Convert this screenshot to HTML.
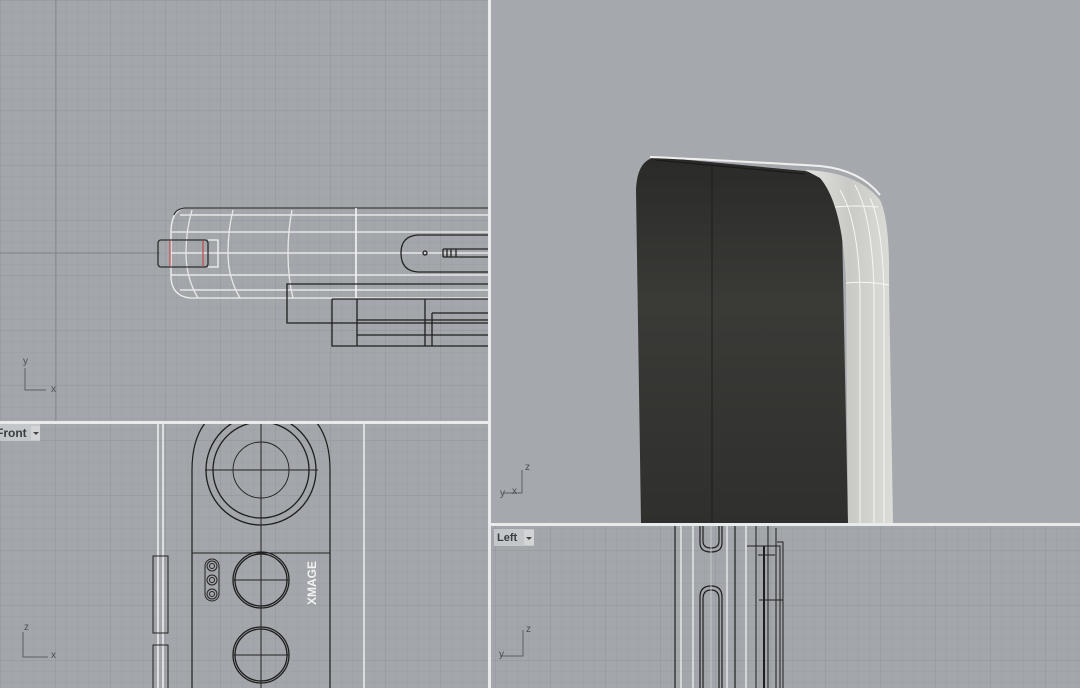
<!DOCTYPE html>
<html><head><style>
html,body{margin:0;padding:0;width:1080px;height:688px;overflow:hidden;background:#a3a7ab}
svg{display:block;font-family:"Liberation Sans",sans-serif}
</style></head><body>
<svg width="1080" height="688" viewBox="0 0 1080 688" xmlns="http://www.w3.org/2000/svg">
<defs>
<pattern id="g" width="11" height="11" patternUnits="userSpaceOnUse" x="0" y="0">
<path d="M0 0H11M0 0V11" stroke="#9b9fa3" stroke-width="1" fill="none"/>
</pattern>
<pattern id="G" width="55" height="55" patternUnits="userSpaceOnUse" x="0" y="0">
<rect width="55" height="55" fill="url(#g)"/>
<path d="M0 0H55M0 0V55" stroke="#92969b" stroke-width="1" fill="none"/>
</pattern>
<linearGradient id="dk" x1="0" y1="0" x2="0" y2="1">
<stop offset="0" stop-color="#2a2a28"/><stop offset="0.4" stop-color="#3a3a37"/><stop offset="1" stop-color="#2f302d"/>
</linearGradient>
<linearGradient id="sv" x1="0" y1="0" x2="1" y2="0">
<stop offset="0" stop-color="#e4e4e0"/><stop offset="0.5" stop-color="#c9cac6"/><stop offset="1" stop-color="#dcdcd8"/>
</linearGradient>
<clipPath id="cTL"><rect x="0" y="0" width="488" height="421"/></clipPath>
<clipPath id="cBL"><rect x="0" y="424" width="488" height="264"/></clipPath>
<clipPath id="cBR"><rect x="491" y="526" width="589" height="162"/></clipPath>
</defs>

<!-- TOP LEFT -->
<rect x="0" y="0" width="489" height="422" fill="#a3a7ab"/>
<rect x="0" y="0" width="489" height="422" fill="url(#G)"/>
<g clip-path="url(#cTL)">
<line x1="0" y1="253" x2="160" y2="253" stroke="#7f8388"/>
<line x1="56" y1="0" x2="56" y2="422" stroke="#8a8e93"/>
<g fill="none" stroke-width="1.3">
<path d="M488 208H185Q172 210 171 230V278Q172 296 190 298H488" stroke="#f2f2f2"/>
<path d="M488 208H185Q176 209 174 215" stroke="#333" />
<path d="M171 232H488M171 253H488M171 275H488M180 290H488M180 215H488" stroke="#f2f2f2"/>
<path d="M356 208V298" stroke="#f5f5f5" stroke-width="1.6"/>
<path d="M192 210Q186 230 186 253Q186 278 198 298M233 210Q228 230 228 253Q228 278 240 298M292 210Q288 230 288 253Q288 278 293 298" stroke="#e8e8e8"/>
<path d="M208 240H218V267H208" stroke="#f2f2f2"/>
<rect x="158" y="240" width="50" height="27" rx="3" stroke="#2c2c2c"/>
<path d="M170 241V266M203 241V266" stroke="#c0504d"/>
<path d="M488 235H418Q401 236 401 253Q401 271 418 272H488" stroke="#222"/>
<circle cx="425" cy="253" r="2" stroke="#222"/>
<path d="M443 249H488M443 257H488M443 249V257M447 249V257M451 249V257M456 249V257" stroke="#222"/>
<path d="M488 284H287V323H488M332 299H488M332 299V346H488M357 299V346M357 320H488M425 299V346M432 313V346M432 313H488M357 335H488" stroke="#1e1e1e"/>
</g>
</g>
<g stroke="#5c6166" fill="none"><path d="M25 368V390H46"/></g>
<text x="23" y="364" font-size="10" fill="#4a4f54">y</text>
<text x="51" y="392" font-size="10" fill="#4a4f54">x</text>

<!-- TOP RIGHT -->
<rect x="491" y="0" width="589" height="523" fill="#a5a9ad"/>
<path d="M641 523L636 190Q637 160 656 157L805 171Q836 178 842 226L848 523Z" fill="url(#dk)"/>
<path d="M805 170Q858 172 880 200Q890 220 889 285L893 523H848L846 283Q843 205 820 178Z" fill="url(#sv)"/>
<path d="M650 157Q700 159 820 166Q860 170 880 195" stroke="#f0f0ee" stroke-width="2" fill="none"/>
<g fill="none" stroke="#f6f6f4" stroke-width="1">
<path d="M860 523V290Q858 220 840 190M874 523V290Q872 215 855 185M884 523V290Q882 222 870 198M846 283Q868 281 889 285M835 207Q855 205 878 207"/>
</g>
<path d="M712 165V523" stroke="#1c1c1a" stroke-width="1"/>
<path d="M655 160L805 174" stroke="#1a1a18" stroke-width="1.2" fill="none"/>
<g stroke="#5c6166" fill="none"><path d="M522 470V493H503"/></g>
<text x="525" y="470" font-size="10" fill="#4a4f54">z</text>
<text x="500" y="496" font-size="10" fill="#4a4f54">y</text>
<text x="512" y="494" font-size="10" fill="#4a4f54">x</text>

<!-- BOTTOM LEFT -->
<rect x="0" y="424" width="488" height="264" fill="#a3a7ab"/>
<rect x="0" y="424" width="488" height="264" fill="url(#G)"/>
<g clip-path="url(#cBL)" fill="none">
<path d="M158 424V688M163 424V688M364 424V688" stroke="#f4f4f4" stroke-width="1.4"/>
<rect x="153" y="556" width="15" height="77" stroke="#222" stroke-width="1"/>
<rect x="153" y="645" width="15" height="50" stroke="#222" stroke-width="1"/>
<path d="M192 700V470Q192 401 261 401Q330 401 330 470V700" stroke="#1e1e1e" stroke-width="1.2"/>
<g stroke="#1e1e1e" stroke-width="1.3">
<circle cx="261" cy="470" r="55"/><circle cx="261" cy="470" r="48"/>
<circle cx="261" cy="470" r="28" stroke-width="0.9"/>
<circle cx="261" cy="580" r="28"/><circle cx="261" cy="580" r="26"/>
<circle cx="261" cy="655" r="28"/><circle cx="261" cy="655" r="26"/>
</g>
<path d="M261 424V688M205 470H318M192 553H330M233 580H289M233 655H289" stroke="#222" stroke-width="1"/>
<g stroke="#222" stroke-width="1">
<rect x="205" y="559" width="14" height="42" rx="7"/>
<circle cx="212" cy="566" r="5"/><circle cx="212" cy="580" r="5"/><circle cx="212" cy="594" r="5"/>
<circle cx="212" cy="566" r="2.5"/><circle cx="212" cy="580" r="2.5"/><circle cx="212" cy="594" r="2.5"/>
</g>
</g>
<text transform="translate(316,605) rotate(-90)" font-size="12" font-weight="bold" fill="#f2f2f2">XMAGE</text>
<rect x="0" y="424" width="40" height="17" fill="#c4c7ca"/>
<text x="-4" y="437" font-size="12" font-weight="bold" fill="#3a3d40">Front</text>
<rect x="31" y="426" width="9" height="14" fill="#d2d4d6"/>
<path d="M33 432H39L36 435Z" fill="#444"/>
<g stroke="#5c6166" fill="none"><path d="M23 632V657H48"/></g>
<text x="24" y="630" font-size="10" fill="#4a4f54">z</text>
<text x="51" y="658" font-size="10" fill="#4a4f54">x</text>

<!-- BOTTOM RIGHT -->
<rect x="491" y="526" width="589" height="162" fill="#a3a7ab"/>
<rect x="491" y="526" width="589" height="162" fill="url(#G)"/>
<g fill="none" stroke-width="1.2" clip-path="url(#cBR)">
<path d="M675 526V688M735 526V688" stroke="#1e1e1e"/>
<path d="M681 526V688M693 526V688M727 526V688M746 526V688" stroke="#f4f4f4"/>
<path d="M700 526V543Q700 552 711 552Q722 552 722 543V526M703 526V541Q703 548 711 548Q719 548 719 541V526" stroke="#1e1e1e"/>
<path d="M700 688V597Q700 586 711 586Q722 586 722 597V688M703 688V599Q703 590 711 590Q719 590 719 599V688" stroke="#1e1e1e"/>
<path d="M711 526V688" stroke="#d0d0d0" stroke-width="0.8"/>
<path d="M756 526V688M768 526V688M776 528V688M747 546H780V688M758 555H775M777 542H783V688M759 600H783" stroke="#1e1e1e" stroke-width="1"/>
<path d="M764 546V688" stroke="#1e1e1e" stroke-width="2"/>
</g>
<rect x="494" y="529" width="40" height="17" fill="#c4c7ca"/>
<text x="497" y="541" font-size="11" font-weight="bold" fill="#3a3d40">Left</text>
<rect x="524" y="530" width="10" height="15" fill="#d2d4d6"/>
<path d="M526 537H532L529 540Z" fill="#444"/>
<g stroke="#5c6166" fill="none"><path d="M523 630V656H500"/></g>
<text x="526" y="632" font-size="10" fill="#4a4f54">z</text>
<text x="499" y="657" font-size="10" fill="#4a4f54">y</text>

<!-- dividers -->
<rect x="0" y="421" width="490" height="3" fill="#e8eaec"/>
<rect x="488" y="0" width="3" height="688" fill="#e8eaec"/>
<rect x="491" y="523" width="589" height="3" fill="#e8eaec"/>
</svg>
</body></html>
